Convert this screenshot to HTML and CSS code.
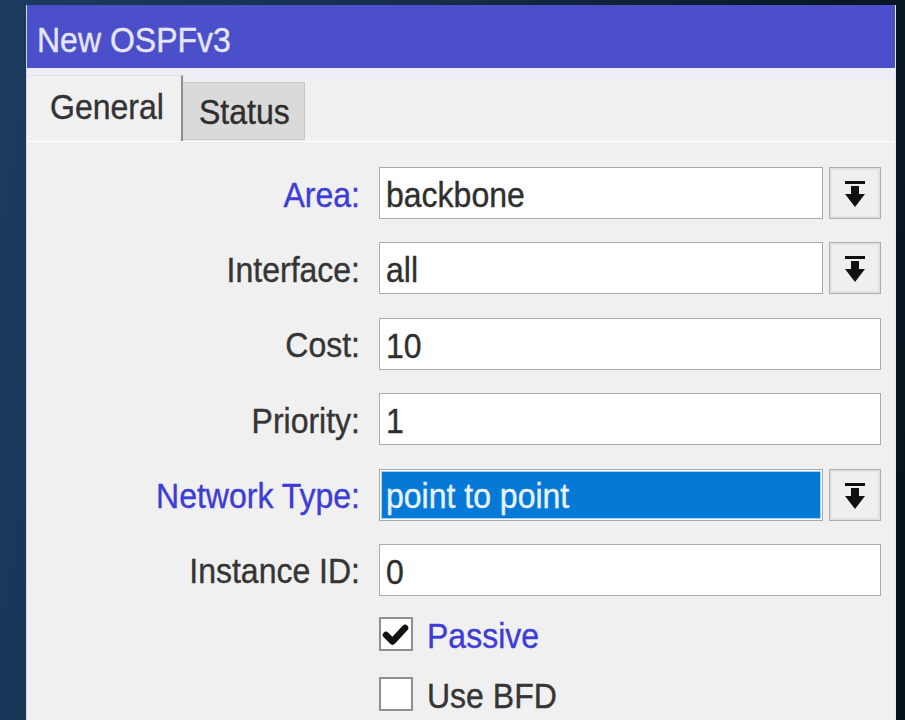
FILE: index.html
```html
<!DOCTYPE html>
<html lang="en">
<head>
<meta charset="utf-8">
<title>New OSPFv3</title>
<link rel="stylesheet" href="styles.css">
</head>
<body>
<div class="window">
  <div class="titlebar"><span class="t">New OSPFv3</span></div>
  <div class="tabstrip">
    <div class="tab tab-active"><span class="t">General</span></div>
    <div class="tab"><span class="t">Status</span></div>
  </div>
  <div class="panel">
    <div class="row">
      <span class="lbl accent"><span class="t">Area:</span></span>
      <div class="combo">
        <div class="field"><span class="t">backbone</span></div>
        <span class="drop">
          <svg width="20" height="26" viewBox="0 0 20 26"><rect x="0" y="0" width="20" height="3"/><path d="M6 5H14V13H20L10 26L0 13H6Z"/></svg>
        </span>
      </div>
    </div>
    <div class="row">
      <span class="lbl"><span class="t">Interface:</span></span>
      <div class="combo">
        <div class="field"><span class="t">all</span></div>
        <span class="drop">
          <svg width="20" height="26" viewBox="0 0 20 26"><rect x="0" y="0" width="20" height="3"/><path d="M6 5H14V13H20L10 26L0 13H6Z"/></svg>
        </span>
      </div>
    </div>
    <div class="row">
      <span class="lbl"><span class="t">Cost:</span></span>
      <div class="field"><span class="t">10</span></div>
    </div>
    <div class="row">
      <span class="lbl"><span class="t">Priority:</span></span>
      <div class="field"><span class="t">1</span></div>
    </div>
    <div class="row">
      <span class="lbl accent"><span class="t">Network Type:</span></span>
      <div class="combo">
        <div class="field field-selected"><span class="selection"><span class="t">point to point</span></span></div>
        <span class="drop">
          <svg width="20" height="26" viewBox="0 0 20 26"><rect x="0" y="0" width="20" height="3"/><path d="M6 5H14V13H20L10 26L0 13H6Z"/></svg>
        </span>
      </div>
    </div>
    <div class="row">
      <span class="lbl"><span class="t">Instance ID:</span></span>
      <div class="field"><span class="t">0</span></div>
    </div>
    <div class="checks">
      <div class="check">
        <span class="box">
          <svg width="30" height="30" viewBox="0 0 30 30"><path d="M5 16L11.5 22.5L24 9" fill="none" stroke="#111" stroke-width="6.5" stroke-linejoin="round" stroke-linecap="round"/></svg>
        </span>
        <span class="accent"><span class="t">Passive</span></span>
      </div>
      <div class="check">
        <span class="box"></span>
        <span><span class="t">Use BFD</span></span>
      </div>
    </div>
  </div>
</div>
</body>
</html>
```
FILE: styles.css
```css
html, body {
  margin: 0;
  height: 100%;
}

body {
  overflow: hidden;
  background: linear-gradient(100deg, #1c3b5f 0%, #132c48 45%, #0a1a2b 75%, #06111c 100%);
  font-family: "Liberation Sans", Arial, sans-serif;
  font-size: 32px;
  color: #353535;
}

/* text is drawn a little taller than the stock face, like the original UI font */
.t {
  display: inline-block;
  transform: scaleY(1.12);
  transform-origin: 50% 62%;
  -webkit-text-stroke: 0.35px currentColor;
}

.window {
  margin: 5px 0 0 26px;
  width: 868px;
  height: 760px;
  border-left: 1px solid #d6d6e2;
  border-right: 1px solid #e8e8ee;
  background: #f0f0f0;
}

.titlebar {
  height: 63px;
  padding: 9px 0 0 10px;
  box-sizing: border-box;
  line-height: 55px;
  background: #4b4fc9;
  color: #e6e6fb;
}

.tabstrip {
  height: 73px;
  display: flex;
  align-items: flex-end;
  background: linear-gradient(#ededf6 0, #ededf6 12px, #f0f0f0 12px);
}

.tab {
  box-sizing: border-box;
  height: 58px;
  width: 122px;
  margin-bottom: 1px;
  padding-left: 16px;
  line-height: 60px;
  background: #dadada;
  border: 1px solid #c8c8c8;
  border-left: none;
  color: #2e2e2e;
}

.tab-active {
  height: 66px;
  width: 156px;
  margin-bottom: 0;
  padding-left: 23px;
  line-height: 64px;
  background: #f0f0f0;
  border: none;
  border-top: 1px solid #e2e2e2;
  border-right: 2px solid #8e8e8e;
  color: #333;
}

.panel {
  border-top: 1px solid #ffffff;
  padding: 25px 14px 0 0;
  display: flex;
  flex-direction: column;
  gap: 23.4px;
}

.row {
  display: grid;
  grid-template-columns: 333px 502px;
  column-gap: 19px;
  height: 52px;
  align-items: center;
}

.lbl {
  text-align: right;
  white-space: nowrap;
  padding-top: 4px;
}

.accent {
  color: #3c3cd6;
}

.combo {
  display: flex;
  gap: 6px;
  height: 52px;
}

.field {
  box-sizing: border-box;
  height: 52px;
  flex: 1;
  padding: 3px 0 0 6px;
  line-height: 48px;
  background: #ffffff;
  border: 1px solid #a9a9a9;
  color: #2f2f2f;
  white-space: nowrap;
}

.field-selected {
  padding: 1px;
}

.selection {
  display: block;
  height: 48px;
  box-sizing: border-box;
  padding: 3px 0 0 4px;
  line-height: 42px;
  background: #0479d6;
  border: 1px solid #9fd0f6;
  color: #e9f3ff;
}

.drop {
  box-sizing: border-box;
  width: 52px;
  height: 52px;
  display: flex;
  align-items: center;
  justify-content: center;
  padding-top: 2px;
  background: #efefef;
  border: 1px solid #adadad;
  box-shadow: inset 0 0 0 2px #e2e2e2;
}

.drop svg {
  fill: #111;
}

.checks {
  display: flex;
  flex-direction: column;
  gap: 26px;
  padding-left: 352px;
  margin-top: -2px;
}

.check {
  display: flex;
  align-items: center;
  gap: 14px;
  height: 34px;
}

.check > span:last-child {
  padding-top: 4px;
}

.box {
  box-sizing: border-box;
  width: 34px;
  height: 34px;
  display: flex;
  align-items: center;
  justify-content: center;
  background: #ffffff;
  border: 2px solid #8f8f8f;
}
```
